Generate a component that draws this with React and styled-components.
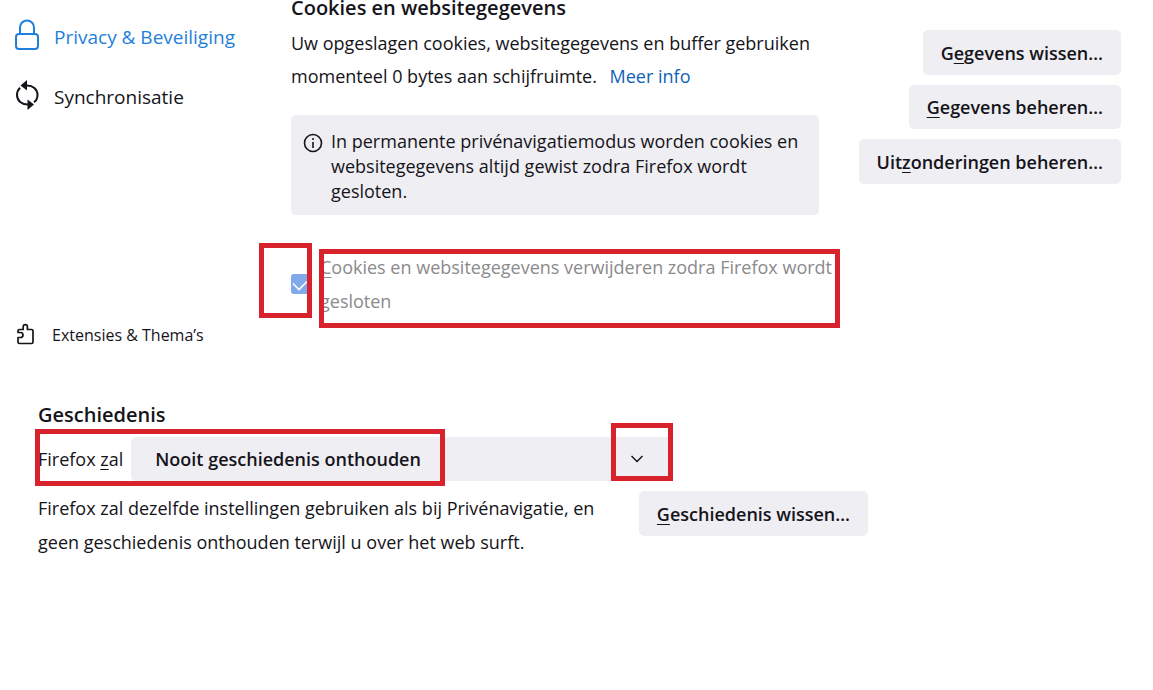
import React from "react";
import styled, { createGlobalStyle } from "styled-components";

const GlobalStyle = createGlobalStyle`
  *, *::before, *::after { box-sizing: border-box; }
  body {
    margin: 0;
    background: #ffffff;
    color: #15141a;
    font-family: "Open Sans", "Noto Sans", sans-serif;
    font-size: 18px;
  }
  h2, p { margin: 0; }
`;

const Page = styled.div`
  display: flex;
  flex-direction: column;
  gap: 56px;
`;

const Settings = styled.div`
  display: flex;
`;

const Sidebar = styled.nav`
  display: flex;
  flex-direction: column;
  flex: 0 0 291px;
  padding: 7px 0 0 14px;
`;

const NavLink = styled.a`
  display: flex;
  align-items: center;
  gap: 14px;
  height: 60px;
  font-size: 19px;
  color: ${(p) => (p.$active ? "#1f7fdb" : "#15141a")};
  text-decoration: none;
`;

const SmallNavLink = styled(NavLink)`
  margin-top: auto;
  height: 32px;
  font-size: 16px;
`;

const IconSlot = styled.span`
  display: flex;
  justify-content: center;
  flex: 0 0 26px;
  padding-bottom: 4px;
`;

const SmallIconSlot = styled(IconSlot)`
  flex-basis: 24px;
  padding-bottom: 2px;
`;

const Main = styled.main`
  display: flex;
  flex: 1;
  justify-content: space-between;
  gap: 32px;
  padding-right: 32px;
`;

const Details = styled.div`
  flex: 0 1 528px;
  padding-bottom: 33px;
`;

const Heading = styled.h2`
  font-size: 20px;
  font-weight: 600;
  line-height: 16px;
`;

const Paragraph = styled.p`
  line-height: 34px;
`;

const StoragePara = styled(Paragraph)`
  margin-top: 11px;
  line-height: 33px;
`;

const MoreLink = styled.a`
  margin-left: 8px;
  color: #0f62b5;
  text-decoration: none;
`;

const InfoBar = styled.div`
  display: flex;
  gap: 8px;
  margin-top: 22px;
  padding: 14px 12px 11px;
  border-radius: 5px;
  background: #efeef3;
  line-height: 25px;
`;

const InfoIcon = styled.svg`
  flex: none;
  margin-top: 4px;
`;

const CheckRow = styled.div`
  display: flex;
  align-items: center;
  gap: 9px;
  margin-top: 35px;
`;

const CheckHolder = styled.span`
  position: relative;
  display: flex;
`;

const Checkbox = styled.input`
  appearance: none;
  width: 20px;
  height: 20px;
  margin: 0;
  border-radius: 3px;
  background: #80aaea;
`;

const CheckMark = styled.svg`
  position: absolute;
  inset: 0;
  pointer-events: none;
`;

const CheckLabel = styled.label`
  position: relative;
  margin-right: -20px;
  line-height: 34px;
  color: #8b8a8d;
`;

const Marker = styled.span`
  position: absolute;
  inset: ${(p) => p.$inset};
  width: ${(p) => p.$width || "auto"};
  border: 5px solid #d9232c;
  pointer-events: none;
`;

const Actions = styled.div`
  display: flex;
  flex-direction: column;
  align-items: flex-end;
  gap: 10px;
  padding-top: 30px;
`;

const Button = styled.button`
  flex: none;
  height: ${(p) => (p.$compact ? 44 : 45)}px;
  padding: 0 18px;
  border: 0;
  border-radius: 5px;
  background: #efeef3;
  color: #15141a;
  font: inherit;
  font-weight: 600;
  white-space: nowrap;
`;

const Key = styled.span`
  text-decoration: underline;
  text-decoration-thickness: 1px;
  text-underline-offset: 3px;
`;

const History = styled.section`
  width: 100%;
  max-width: 868px;
  padding-left: 38px;
`;

const ModeRow = styled.div`
  position: relative;
  display: flex;
  align-items: center;
  gap: 8px;
  width: fit-content;
  margin-top: 14px;
`;

const SelectHolder = styled.div`
  position: relative;
`;

const Select = styled.select`
  appearance: none;
  display: block;
  width: 540px;
  height: 44px;
  padding: 0 60px 0 24px;
  border: 0;
  border-radius: 5px;
  background: #efeef3;
  color: #15141a;
  font: inherit;
  font-weight: 600;
`;

const Chevron = styled.svg`
  position: absolute;
  top: 18px;
  right: 28px;
  pointer-events: none;
`;

const HistoryRow = styled.div`
  display: flex;
  justify-content: space-between;
  align-items: flex-start;
  margin-top: 10px;
`;

const HistoryText = styled(Paragraph)`
  flex: 0 1 570px;
`;

function LockIcon() {
  return (
    <svg width="26" height="32" viewBox="0 0 26 32" fill="none" stroke="#1f7fdb" strokeWidth="2" aria-hidden="true">
      <rect x="2" y="15" width="22" height="15" rx="3" />
      <path d="M6 15V8.500a7 7 0 0 1 14 0V15" />
    </svg>
  );
}

function SyncIcon() {
  return (
    <svg width="26" height="32" viewBox="0 0 26 32" fill="none" stroke="#15141a" strokeWidth="2" aria-hidden="true">
      <path d="M12 6.500C19 6 23.500 10.500 23.500 16c0 3-1.200 5.500-3.500 7.300" />
      <path d="M15 25.500C7.500 26 3 21.500 3 16c0-3 1.200-5.500 3-7.300" />
      <path d="M13 1v10.500L6.500 6.500z" fill="#15141a" stroke="none" />
      <path d="M13.500 20.500V31l6.500-5.500z" fill="#15141a" stroke="none" />
    </svg>
  );
}

function PuzzleIcon() {
  return (
    <svg width="20" height="22" viewBox="0 0 20 22" fill="none" stroke="#15141a" strokeWidth="1.700" strokeLinejoin="round" aria-hidden="true">
      <path d="M2 9.500V8Q2 6.500 3.500 6.500H7.200V3.800a2.100 2.100 0 0 1 4.200 0v2.700h4.100Q17 6.500 17 8v11q0 1.500-1.500 1.500h-12Q2 20.500 2 19v-4.500h2.500a2.500 2.500 0 0 0 0-5z" />
    </svg>
  );
}

export default function App() {
  return (
    <>
      <GlobalStyle />
      <Page>
        <Settings>
          <Sidebar>
            <NavLink href="#privacy" $active>
              <IconSlot><LockIcon /></IconSlot>
              Privacy &amp; Beveiliging
            </NavLink>
            <NavLink href="#sync">
              <IconSlot><SyncIcon /></IconSlot>
              Synchronisatie
            </NavLink>
            <SmallNavLink href="#addons">
              <SmallIconSlot><PuzzleIcon /></SmallIconSlot>
              Extensies &amp; Thema’s
            </SmallNavLink>
          </Sidebar>
          <Main>
            <Details>
              <Heading>Cookies en websitegegevens</Heading>
              <StoragePara>
                Uw opgeslagen cookies, websitegegevens en buffer gebruiken
                momenteel 0 bytes aan schijfruimte. <MoreLink href="#info">Meer info</MoreLink>
              </StoragePara>
              <InfoBar>
                <InfoIcon width="20" height="20" viewBox="0 0 20 20" fill="none" stroke="#15141a" aria-hidden="true">
                  <circle cx="10" cy="10" r="8.500" strokeWidth="1.600" />
                  <path d="M10 9v6" strokeWidth="1.600" />
                  <circle cx="10" cy="6" r="1" fill="#15141a" stroke="none" />
                </InfoIcon>
                <p>
                  In permanente privénavigatiemodus worden cookies en
                  websitegegevens altijd gewist zodra Firefox wordt gesloten.
                </p>
              </InfoBar>
              <CheckRow>
                <CheckHolder>
                  <Checkbox type="checkbox" id="clear" defaultChecked disabled />
                  <CheckMark width="20" height="20" viewBox="0 0 20 20" fill="none" stroke="#fff" strokeWidth="1.600">
                    <path d="M2 9.500l6 6L16 7.500" />
                  </CheckMark>
                  <Marker $inset="-31px -1px -24px -32px" />
                </CheckHolder>
                <CheckLabel htmlFor="clear">
                  <Key>C</Key>ookies en websitegegevens verwijderen zodra Firefox wordt gesloten
                  <Marker $inset="-1px -1px -10px -1px" />
                </CheckLabel>
              </CheckRow>
            </Details>
            <Actions>
              <Button type="button">G<Key>e</Key>gevens wissen…</Button>
              <Button type="button" $compact><Key>G</Key>egevens beheren…</Button>
              <Button type="button">Uit<Key>z</Key>onderingen beheren…</Button>
            </Actions>
          </Main>
        </Settings>
        <History>
          <Heading>Geschiedenis</Heading>
          <ModeRow>
            <label htmlFor="mode">Firefox <Key>z</Key>al</label>
            <SelectHolder>
              <Select id="mode" defaultValue="never">
                <option value="never">Nooit geschiedenis onthouden</option>
              </Select>
              <Chevron width="12" height="8" viewBox="0 0 12 8" fill="none" stroke="#15141a" strokeWidth="1.500">
                <path d="M0.500 1l5.500 5.500L11.500 1" />
              </Chevron>
              <Marker $inset="-14px -2px 0 auto" $width="62px" />
            </SelectHolder>
            <Marker $inset="-8px 226px -5px -3px" />
          </ModeRow>
          <HistoryRow>
            <HistoryText>
              Firefox zal dezelfde instellingen gebruiken als bij Privénavigatie, en
              geen geschiedenis onthouden terwijl u over het web surft.
            </HistoryText>
            <Button type="button"><Key>G</Key>eschiedenis wissen…</Button>
          </HistoryRow>
        </History>
      </Page>
    </>
  );
}
